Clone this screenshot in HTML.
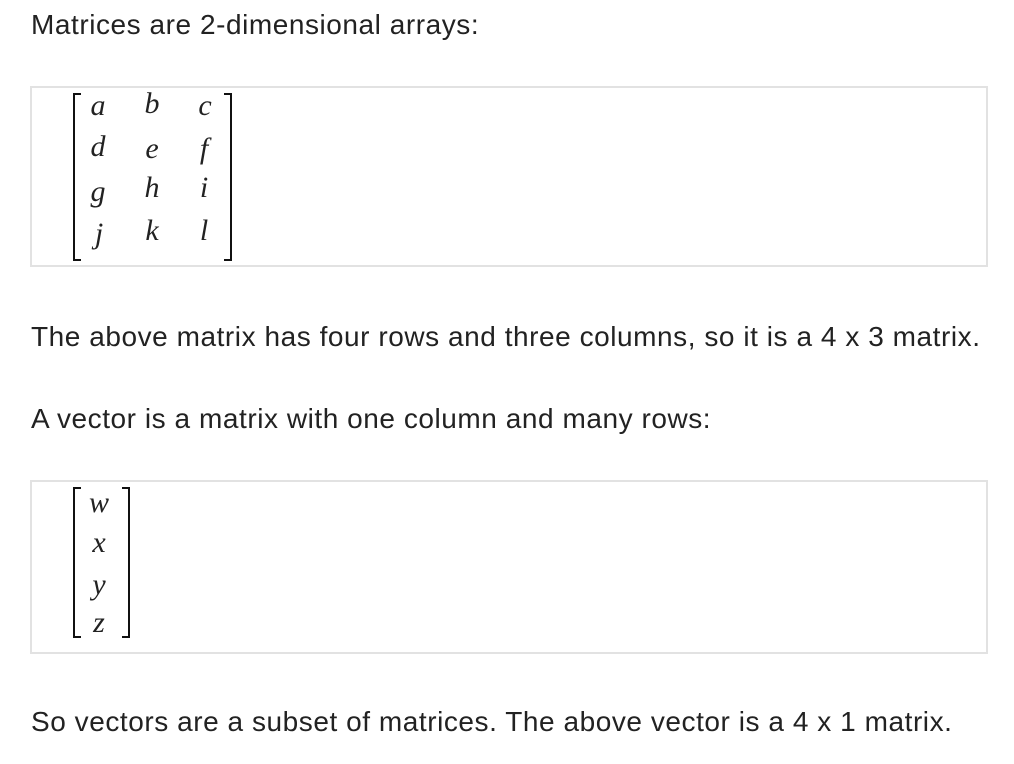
<!DOCTYPE html>
<html><head><meta charset="utf-8"><style>
body{margin:0;background:#fff;width:1014px;height:764px;position:relative;overflow:hidden;font-family:"Liberation Sans",sans-serif;color:#222}
.t{position:absolute;left:31px;font-size:28px;white-space:nowrap;letter-spacing:0.55px}
.box{position:absolute;left:30px;width:954px;border:2px solid #e2e2e2;background:#fff}
.m{position:absolute;font-family:"Liberation Serif",serif;font-style:italic;font-size:30px;line-height:1;transform:translate(-50%,-50%)}
.br{position:absolute;border:2px solid #111;width:6px}
.l{border-right:none}.r{border-left:none}
</style></head><body>
<div class="t" style="top:9px">Matrices are 2-dimensional arrays:</div>
<div class="box" style="top:86px;height:177px"></div>
<div class="br l" style="left:73px;top:93px;height:164px"></div>
<div class="br r" style="left:224px;top:93px;height:164px"></div>
<div class="m" style="left:98px;top:106px">a</div><div class="m" style="left:152px;top:104px">b</div><div class="m" style="left:205px;top:106px">c</div>
<div class="m" style="left:98px;top:147px">d</div><div class="m" style="left:152px;top:149px">e</div><div class="m" style="left:204px;top:149px">f</div>
<div class="m" style="left:98px;top:192px">g</div><div class="m" style="left:152px;top:188px">h</div><div class="m" style="left:204px;top:188px">i</div>
<div class="m" style="left:99px;top:234px">j</div><div class="m" style="left:152px;top:231px">k</div><div class="m" style="left:204px;top:231px">l</div>
<div class="t" style="top:321px">The above matrix has four rows and three columns, so it is a 4 x 3 matrix.</div>
<div class="t" style="top:403px">A vector is a matrix with one column and many rows:</div>
<div class="box" style="top:480px;height:170px"></div>
<div class="br l" style="left:73px;top:487px;height:147px"></div>
<div class="br r" style="left:122px;top:487px;height:147px"></div>
<div class="m" style="left:99px;top:503px">w</div>
<div class="m" style="left:99px;top:543px">x</div>
<div class="m" style="left:99px;top:585px">y</div>
<div class="m" style="left:99px;top:623px">z</div>
<div class="t" style="top:706px">So vectors are a subset of matrices. The above vector is a 4 x 1 matrix.</div>
</body></html>
